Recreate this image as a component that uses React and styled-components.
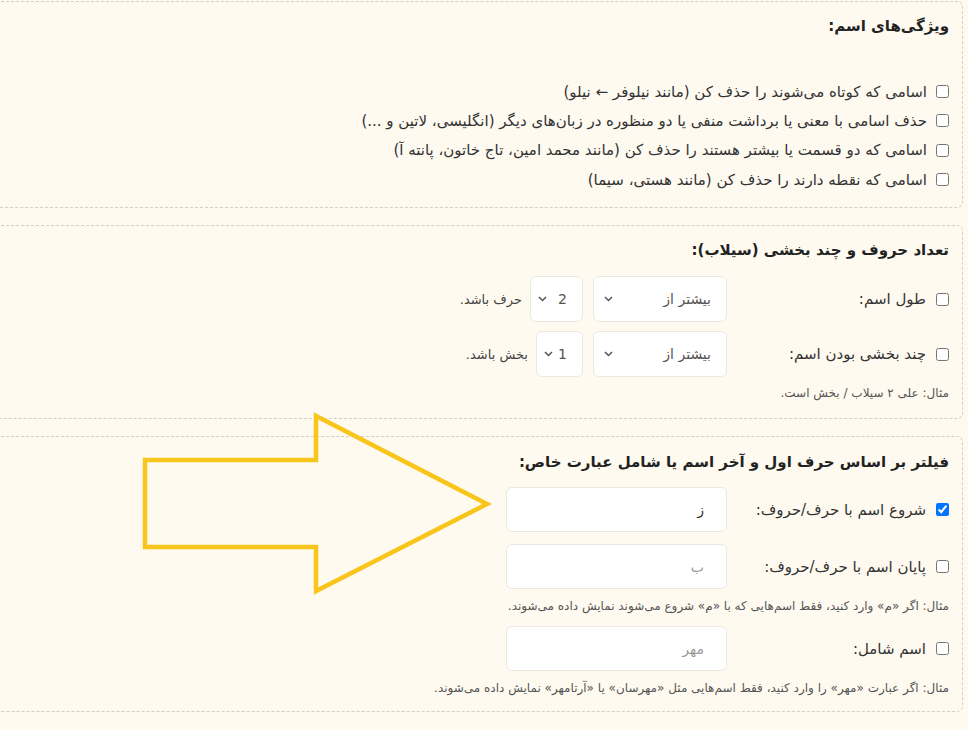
import React from 'react';
import styled, { createGlobalStyle } from 'styled-components';

const GlobalStyle = createGlobalStyle`
  html, body {
    margin: 0;
    padding: 0;
    background: #fefaf0;
  }
  body {
    direction: rtl;
    font-family: "DejaVu Sans", "Noto Sans", sans-serif;
    color: #333;
    overflow: hidden;
  }
`;

const Shell = styled.div`
  position: relative;
  width: 100%;
  min-height: 730px;
  overflow: hidden;
`;

const Page = styled.div`
  width: calc(100% + 20px);
  padding: 1px 5px 0 0;
  box-sizing: border-box;
  display: flex;
  flex-direction: column;
  gap: 17px;
`;

const Section = styled.section`
  border: 1px dashed #d3cfc6;
  border-radius: 6px;
  padding: ${p => p.$pt || 13}px 13px ${p => p.$pb || 15}px 13px;
  display: flex;
  flex-direction: column;
`;

const Heading = styled.h3`
  margin: 0 0 ${p => p.$space || 16}px;
  font-size: 15px;
  font-weight: 700;
  line-height: 22px;
  color: #222;
`;

const OptionList = styled.div`
  display: flex;
  flex-direction: column;
`;

const Option = styled.label`
  display: flex;
  align-items: center;
  gap: 9px;
  height: 29.3px;
  font-size: 15px;
  color: #333;
`;

const Check = styled.input.attrs({ type: 'checkbox' })`
  width: 13px;
  height: 13px;
  margin: 0;
  flex: none;
`;

const Rows = styled.div`
  display: flex;
  flex-direction: column;
  gap: ${p => p.$gap || 10}px;
`;

const Row = styled.div`
  display: flex;
  align-items: center;
  gap: 10px;
`;

const LabelCol = styled.label`
  width: 212px;
  display: flex;
  align-items: center;
  gap: 10px;
  font-size: 15px;
  color: #333;
  flex: none;
`;

const SelectWrap = styled.div`
  position: relative;
  width: ${p => p.$w}px;
  height: 46px;
  flex: none;
`;

const Select = styled.select`
  appearance: none;
  width: 100%;
  height: 100%;
  box-sizing: border-box;
  border: 1px solid #ece8df;
  border-radius: 6px;
  background: #fff;
  padding: 0 15px 0 ${p => p.$pl || 28}px;
  font-family: inherit;
  font-size: 14px;
  color: #555;
  direction: rtl;
`;

const Chevron = styled.svg`
  position: absolute;
  left: ${p => p.$left || 11}px;
  top: 20px;
  pointer-events: none;
`;

const Suffix = styled.span`
  font-size: 13px;
  color: #444;
  margin-right: -2px;
`;

const TextInput = styled.input`
  width: 221px;
  height: 45px;
  box-sizing: border-box;
  border: 1px solid #ece8df;
  border-radius: 6px;
  background: #fff;
  padding: 0 22px;
  font-family: inherit;
  font-size: 14px;
  color: #333;
  direction: rtl;
  &::placeholder {
    color: #9a9a9a;
  }
`;

const Group = styled.div`
  display: flex;
  flex-direction: column;
  gap: 9px;
`;

const Hint = styled.div`
  font-size: 12px;
  line-height: 16px;
  color: #555;
  margin-top: ${p => p.$top || 0}px;
`;

const Arrow = styled.svg`
  position: absolute;
  left: 140px;
  top: 410px;
`;

function DropDown({ width, value, options, small }) {
  return (
    <SelectWrap $w={width}>
      <Select defaultValue={value} $pl={small ? 18 : 28}>
        {options.map(o => <option key={o}>{o}</option>)}
      </Select>
      <Chevron $left={small ? 8 : 11} width="9" height="6" viewBox="0 0 9 6">
        <path d="M1 1l3.5 3.5L8 1" fill="none" stroke="#555" strokeWidth="1.5" />
      </Chevron>
    </SelectWrap>
  );
}

const features = [
  'اسامی که کوتاه می‌شوند را حذف کن (مانند نیلوفر ← نیلو)',
  'حذف اسامی با معنی یا برداشت منفی یا دو منظوره در زبان‌های دیگر (انگلیسی، لاتین و ...)',
  'اسامی که دو قسمت یا بیشتر هستند را حذف کن (مانند محمد امین، تاج خاتون، پانته آ)',
  'اسامی که نقطه دارند را حذف کن (مانند هستی، سیما)',
];

export default function App() {
  return (
    <Shell>
      <GlobalStyle />
      <Page>
        <Section $pb={13}>
          <Heading $space={40}>ویژگی‌های اسم:</Heading>
          <OptionList>
            {features.map(f => (
              <Option key={f}>
                <Check />
                {f}
              </Option>
            ))}
          </OptionList>
        </Section>

        <Section $pb={17}>
          <Heading $space={15}>تعداد حروف و چند بخشی (سیلاب):</Heading>
          <Rows $gap={9}>
            <Row>
              <LabelCol><Check />طول اسم:</LabelCol>
              <DropDown width={134} value="بیشتر از" options={['بیشتر از', 'کمتر از', 'برابر با']} />
              <DropDown small width={53} value="2" options={['1', '2', '3', '4', '5']} />
              <Suffix>حرف باشد.</Suffix>
            </Row>
            <Row>
              <LabelCol><Check />چند بخشی بودن اسم:</LabelCol>
              <DropDown width={134} value="بیشتر از" options={['بیشتر از', 'کمتر از', 'برابر با']} />
              <DropDown small width={47} value="1" options={['1', '2', '3']} />
              <Suffix>بخش باشد.</Suffix>
            </Row>
          </Rows>
          <Hint $top={8}>مثال: علی ۲ سیلاب / بخش است.</Hint>
        </Section>

        <Section $pt={14} $pb={15}>
          <Heading $space={14}>فیلتر بر اساس حرف اول و آخر اسم یا شامل عبارت خاص:</Heading>
          <Rows $gap={12}>
            <Row>
              <LabelCol><Check defaultChecked />شروع اسم با حرف/حروف:</LabelCol>
              <TextInput defaultValue="ز" />
            </Row>
            <Group>
              <Row>
                <LabelCol><Check />پایان اسم با حرف/حروف:</LabelCol>
                <TextInput placeholder="ب" />
              </Row>
              <Hint>مثال: اگر «م» وارد کنید، فقط اسم‌هایی که با «م» شروع می‌شوند نمایش داده می‌شوند.</Hint>
            </Group>
            <Group>
              <Row>
                <LabelCol><Check />اسم شامل:</LabelCol>
                <TextInput placeholder="مهر" />
              </Row>
              <Hint>مثال: اگر عبارت «مهر» را وارد کنید، فقط اسم‌هایی مثل «مهرسان» یا «آرتامهر» نمایش داده می‌شوند.</Hint>
            </Group>
          </Rows>
        </Section>
      </Page>

      <Arrow width="360" height="190" viewBox="0 0 360 190">
        <polygon
          points="5,50 176,50 176,6 347,94 176,181 176,137 5,137"
          fill="none"
          stroke="#f8c51c"
          strokeWidth="4.5"
          strokeLinejoin="miter"
        />
      </Arrow>
    </Shell>
  );
}
